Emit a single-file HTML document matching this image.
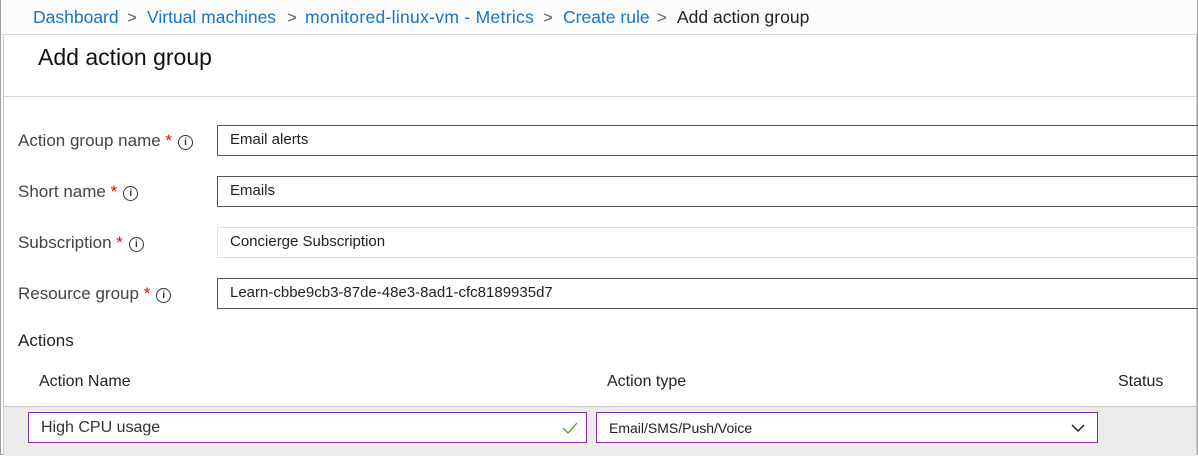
<!DOCTYPE html>
<html><head><style>
body{margin:0;width:1198px;height:455px;overflow:hidden;background:#fff;font-family:"Liberation Sans",sans-serif;position:relative}
.abs{position:absolute}
.bc{left:0;top:0;width:1198px;height:35px;background:#fbfbfb;border-bottom:1px solid #d6d6d6;box-sizing:border-box;font-size:17px;color:#1a73c9;line-height:35px}
.bc span{position:absolute;top:0}
.sep{color:#666}
.lab{font-size:17px;color:#444;left:18px}
.req{color:#e00}
.info{display:inline-block;width:13px;height:13px;border:1.3px solid #333;border-radius:50%;font-size:10px;line-height:13px;text-align:center;color:#333;vertical-align:1px;margin-left:6px;font-weight:bold}
.inp{left:217px;width:990px;height:31px;box-sizing:border-box;font-size:15px;color:#222;padding-left:12px;line-height:27px}
</style></head><body>
<div class="abs bc">
<span style="left:33px;font-size:17.5px">Dashboard</span><span class="sep" style="left:127px">&gt;</span>
<span style="left:147px;font-size:17.5px">Virtual machines</span><span class="sep" style="left:287px">&gt;</span>
<span style="left:305px;font-size:17.5px;letter-spacing:0.3px">monitored-linux-vm - Metrics</span><span class="sep" style="left:543px">&gt;</span>
<span style="left:563px;font-size:17.5px">Create rule</span><span class="sep" style="left:657px">&gt;</span>
<span style="left:677px;color:#222;font-size:17.5px">Add action group</span>
</div>
<div class="abs" style="left:0;top:0;width:1198px;height:455px;border:1px solid #a0a0a0;border-top:none;box-sizing:border-box"></div>
<div class="abs" style="left:3px;top:35px;width:1px;height:420px;background:#ccc"></div>
<div class="abs" style="left:1196px;top:35px;width:1px;height:420px;background:#ccc"></div>
<div class="abs" style="left:38px;top:44px;font-size:23px;color:#111">Add action group</div>
<div class="abs" style="left:3px;top:96px;width:1194px;height:1px;background:#d6d6d6"></div>

<div class="abs lab" style="top:131px">Action group name <span class="req">*</span><span class="info">i</span></div>
<div class="abs inp" style="top:125px;border:1px solid #8a2da5">Email alerts</div>
<div class="abs lab" style="top:182px">Short name <span class="req">*</span><span class="info">i</span></div>
<div class="abs inp" style="top:176px;border:1px solid #555">Emails</div>
<div class="abs lab" style="top:233px">Subscription <span class="req">*</span><span class="info">i</span></div>
<div class="abs inp" style="top:227px;border:1px solid #ddd">Concierge Subscription</div>
<div class="abs lab" style="top:284px">Resource group <span class="req">*</span><span class="info">i</span></div>
<div class="abs inp" style="top:278px;border:1px solid #555">Learn-cbbe9cb3-87de-48e3-8ad1-cfc8189935d7</div>

<div class="abs" style="left:18px;top:331px;font-size:17px;color:#222">Actions</div>
<div class="abs" style="left:39px;top:373px;font-size:16px;color:#222">Action Name</div>
<div class="abs" style="left:607px;top:373px;font-size:16px;color:#222">Action type</div>
<div class="abs" style="left:1118px;top:373px;font-size:16px;color:#222">Status</div>
<div class="abs" style="left:4px;top:406px;width:1192px;height:49px;background:#edebe9;border-top:1px solid #c8c8c8"></div>
<div class="abs" style="left:28px;top:412px;width:559px;height:31px;box-sizing:border-box;border:1px solid #8a2da5;background:#fff;font-size:16px;color:#333;padding-left:12px;line-height:30px">High CPU usage
<svg class="abs" style="right:8px;top:9px" width="16" height="12"><path d="M1 6 L6 11 L15 1" stroke="#57a300" stroke-width="1.3" fill="none"/></svg></div>
<div class="abs" style="left:596px;top:412px;width:502px;height:31px;box-sizing:border-box;border:1px solid #8a2da5;background:#fff;font-size:14px;color:#222;padding-left:12px;line-height:30px">Email/SMS/Push/Voice
<svg class="abs" style="right:12px;top:11px" width="14" height="9"><path d="M1 1 L7 7 L13 1" stroke="#222" stroke-width="1.5" fill="none"/></svg></div>
</body></html>
